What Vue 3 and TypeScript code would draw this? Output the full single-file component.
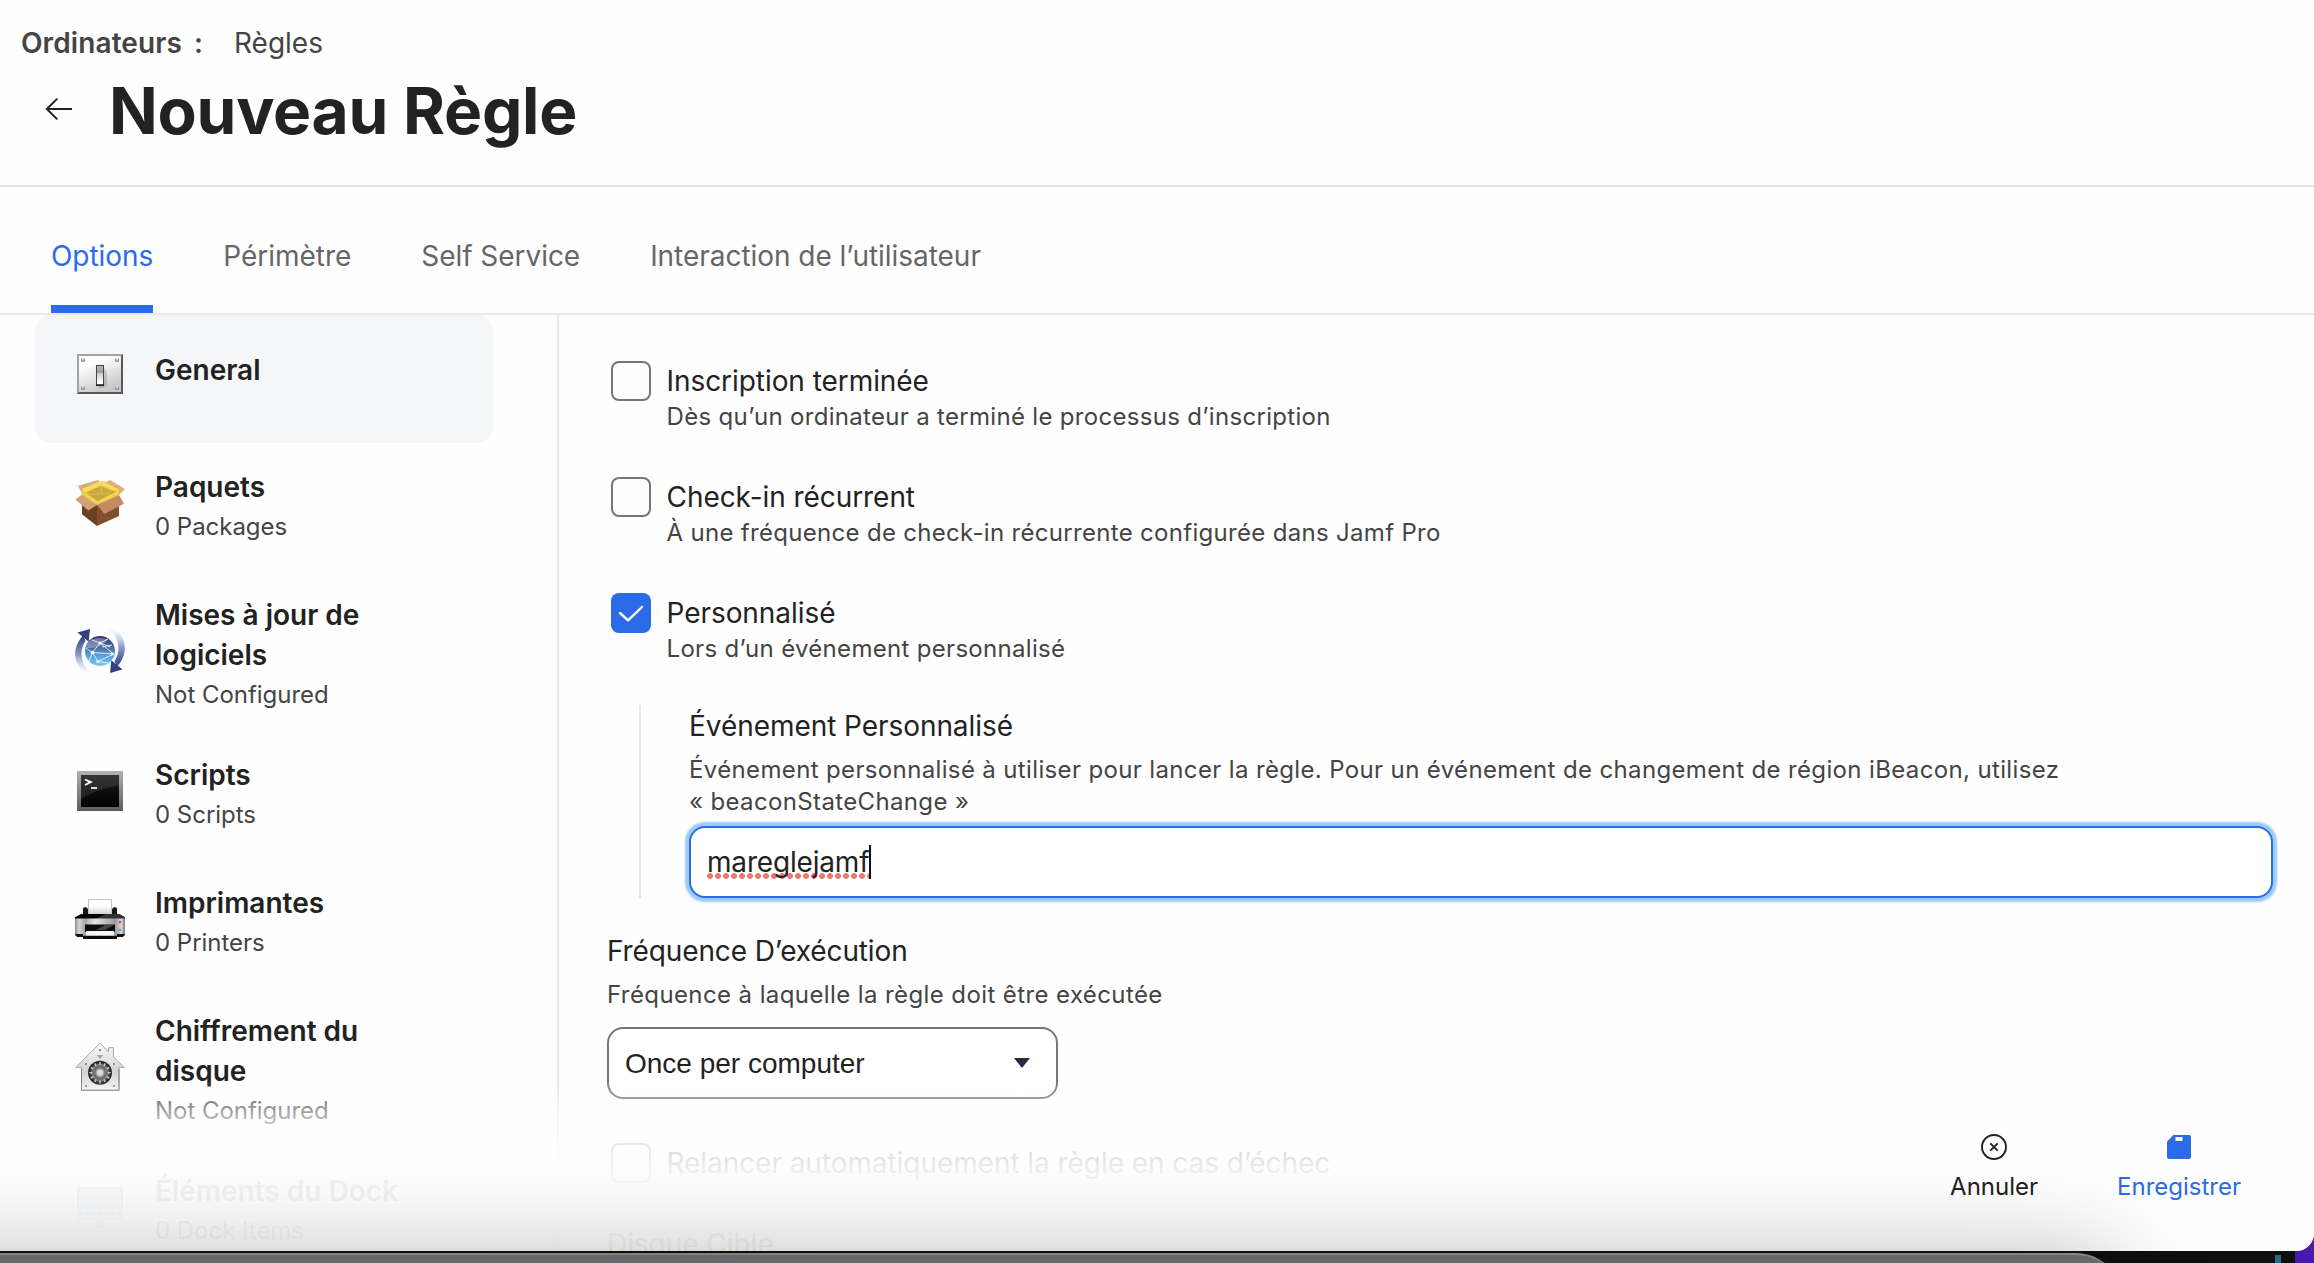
<script setup lang="ts">
import { ref } from 'vue'

interface Section {
  id: string
  title: string
  status?: string
  tall?: boolean
}

const tabs: string[] = ['Options', 'Périmètre', 'Self Service', 'Interaction de l’utilisateur']
const activeTab = ref(0)

const sections: Section[] = [
  { id: 'general', title: 'General' },
  { id: 'packages', title: 'Paquets', status: '0 Packages' },
  { id: 'updates', title: 'Mises à jour de logiciels', status: 'Not Configured', tall: true },
  { id: 'scripts', title: 'Scripts', status: '0 Scripts' },
  { id: 'printers', title: 'Imprimantes', status: '0 Printers' },
  { id: 'encryption', title: 'Chiffrement du disque', status: 'Not Configured', tall: true },
  { id: 'dock', title: 'Éléments du Dock', status: '0 Dock Items' },
]

const triggers = ref([
  { label: 'Inscription terminée', hint: 'Dès qu’un ordinateur a terminé le processus d’inscription', on: false },
  { label: 'Check-in récurrent', hint: 'À une fréquence de check-in récurrente configurée dans Jamf Pro', on: false },
  { label: 'Personnalisé', hint: 'Lors d’un événement personnalisé', on: true },
])

const eventName = ref('mareglejamf')
const ticks = Array.from({ length: 12 }, (_, i) => i * 30)
</script>

<template>
  <div class="desktop">
    <div class="window">
      <header class="header">
        <nav class="crumbs"><b>Ordinateurs</b><b class="colon">:</b><span>Règles</span></nav>
        <div class="title-row">
          <svg class="back" width="28" height="24" viewBox="0 0 28 24">
            <path d="M27 12H2M12.3 1.6L1.8 12l10.5 10.4" fill="none" stroke="#222" stroke-width="2" />
          </svg>
          <h1>Nouveau Règle</h1>
        </div>
      </header>

      <nav class="tabs">
        <a v-for="(t, i) in tabs" :key="t" class="tab" :class="{ active: i === activeTab }" @click="activeTab = i">{{ t }}</a>
      </nav>

      <div class="body">
        <aside class="side">
          <div v-for="s in sections" :key="s.id" class="item" :class="[{ tall: s.tall }, s.id]">
            <svg class="icon" width="50" height="50" viewBox="0 0 50 50">
              <defs>
                <linearGradient id="plate" x1="0" y1="0" x2=".5" y2="1"><stop offset=".3" stop-color="#fdfdfd" /><stop offset="1" stop-color="#c9c9cb" /></linearGradient>
                <linearGradient id="knob" x1="0" y1="0" x2="0" y2="1"><stop offset="0" stop-color="#bbb" /><stop offset=".35" stop-color="#999" /><stop offset=".4" stop-color="#ccc" /><stop offset=".85" stop-color="#fff" /></linearGradient>
                <linearGradient id="arc" x1="0" y1="0" x2="0" y2="1"><stop offset="0" stop-color="#37407f" /><stop offset=".5" stop-color="#8b9ac6" /><stop offset="1" stop-color="#cfe9f8" stop-opacity="0" /></linearGradient>
                <linearGradient id="globe" x1="0" y1="0" x2="0" y2="1"><stop offset="0" stop-color="#34356d" /><stop offset=".45" stop-color="#5276ad" /><stop offset=".6" stop-color="#4d9ddb" /><stop offset="1" stop-color="#7dc6ef" /></linearGradient>
                <linearGradient id="frame" x1="0" y1="0" x2="0" y2="1"><stop offset="0" stop-color="#b3b3b6" /><stop offset="1" stop-color="#5c5c60" /></linearGradient>
                <linearGradient id="screen" x1="0" y1="0" x2="0" y2="1"><stop offset="0" stop-color="#1d1d1d" /><stop offset="1" stop-color="#000" /></linearGradient>
                <linearGradient id="paper" x1="0" y1="0" x2="0" y2="1"><stop offset=".4" stop-color="#fff" /><stop offset="1" stop-color="#cfcfd1" /></linearGradient>
                <linearGradient id="chassis" x1="0" y1="0" x2="1" y2="0"><stop offset="0" stop-color="#8b8b8f" /><stop offset=".08" stop-color="#d5d5d7" /><stop offset=".2" stop-color="#a4a4a8" /><stop offset=".4" stop-color="#e6e6e7" /><stop offset=".8" stop-color="#9a9a9e" /><stop offset=".93" stop-color="#d4d4d6" /><stop offset="1" stop-color="#777" /></linearGradient>
                <linearGradient id="house" x1="0" y1="0" x2="0" y2="1"><stop offset="0" stop-color="#fafafa" /><stop offset=".6" stop-color="#d2d3d4" /><stop offset="1" stop-color="#f2f2f2" /></linearGradient>
                <radialGradient id="dial"><stop offset="0" stop-color="#d8d8d8" /><stop offset=".25" stop-color="#b5b5b5" /><stop offset=".45" stop-color="#6c6c6e" /><stop offset=".7" stop-color="#77777a" /><stop offset=".8" stop-color="#333" /><stop offset="1" stop-color="#222" /></radialGradient>
              </defs>

              <g v-if="s.id === 'general'">
                <rect x="2" y="5" width="46" height="40" fill="#a2a3a5" />
                <path d="M48 5v40H2l2-2h42V7z" fill="#57585b" />
                <rect x="4" y="7" width="42" height="36" fill="url(#plate)" />
                <path d="M29 19l3 4v13l-3 3h-6z" fill="#000" opacity=".14" />
                <rect x="21.5" y="16.5" width="7" height="19.5" fill="url(#knob)" stroke="#444" />
                <path d="M21 36.2h8" stroke="#111" stroke-width="1.4" />
                <g v-for="p in [[8, 11], [42, 11], [8, 39], [42, 39]]" :key="p.join()">
                  <circle :cx="p[0]" :cy="p[1]" r="2" fill="#77787a" />
                  <rect :x="p[0] - 0.8" :y="p[1] - 2.4" width="1.6" height="3" fill="#f4f4f4" />
                </g>
              </g>

              <g v-else-if="s.id === 'packages'">
                <path d="M7 18.7l15 8.3v21L7 36.3z" fill="#6a4123" />
                <path d="M22 27l22-8.3V38L22 48z" fill="#82502a" />
                <path d="M22 29l22-9v5L30 36zM7 25l6 6 9-4-15-8z" fill="#3c210e" opacity=".35" />
                <path d="M3 7.7L23.3 2 25 5.3 7 15.5z" fill="#d9a87c" />
                <path d="M27 6l8-4 15 9-6 6z" fill="#e0ad7b" />
                <path d="M7 11l19-8 3 .2 15 8.6v5.5L22.5 27 7 17.5z" fill="#f0cd45" />
                <path d="M11 14.400L25 8l16 5.800-18.500 9.400z" fill="#c9a93e" />
                <path d="M7 11l19-8.2L44 11.500l-4 1.500-13.500-6L11 14z" fill="#f8db66" />
                <path d="M26.500 8v7L13 17M26.500 15L36 16.500" fill="none" stroke="#dcbd4c" />
                <path d="M9 16l13.500 8.500L43 14" fill="none" stroke="#f4d75c" stroke-width="1.400" />
                <path d="M7 16.500L.3 21.500 13.300 32.500 22 27z" fill="#d3a078" />
                <path d="M22 27l22-10 5 8.700L29.300 36z" fill="#c28b62" />
              </g>

              <g v-else-if="s.id === 'updates'">
                <g v-for="a in [0, 180]" :key="a" :transform="`rotate(${a} 25 25)`">
                  <path d="M8 9.500C-1 19-3 33 6 43.500 10 48 15 49 20 49 8 43 2 28 10.500 14.500z" fill="url(#arc)" />
                  <path d="M2.500 6.500L15 3l-1.300 12.700z" fill="#363f80" />
                </g>
                <circle cx="25" cy="25" r="15" fill="url(#globe)" />
                <path d="M12 17Q20 9 33 13.500Q26 23 11 22z" fill="#fff" opacity=".28" />
                <path d="M17.500 26.500L25 17l13.500 11L23 35.500z M10.500 22l7 4.500L14 35M17.500 26.500L32 27.500h7M25 17l-8-3M25 17l8-4M25 17L35.500 21M23 35.500L33 37M27 21l10-2" fill="none" stroke="#e9f2fb" stroke-width=".9" />
                <g fill="#fff"><circle cx="17.500" cy="26.500" r="1.800" /><circle cx="25" cy="17" r="1.600" /><circle cx="37" cy="28" r="1.500" /><circle cx="23" cy="35.500" r="1.600" /></g>
              </g>

              <g v-else-if="s.id === 'scripts'">
                <rect x="2" y="5" width="46" height="40" fill="url(#frame)" />
                <rect x="6" y="9" width="38" height="32" fill="url(#screen)" />
                <path d="M6 9h38v10.500Q22 23 6 33z" fill="#fff" opacity=".1" />
                <path d="M10 13.500l5.800 2.600L10 19" fill="none" stroke="#fff" stroke-width="1.800" />
                <rect x="16" y="21" width="6" height="2" fill="#ddd" />
              </g>

              <g v-else-if="s.id === 'printers'">
                <path d="M8 14l3-1 2 2v6H8zM42 14l-3-1-2 2v6h5z" fill="#151515" />
                <rect x="13.500" y="5.500" width="23" height="15.500" fill="url(#paper)" stroke="#c4c4c6" />
                <path d="M6 20h38l6 3.200V25H0v-1.800z" fill="#060606" />
                <path d="M31 20h13l6 3.200V25H20z" fill="#333" />
                <path d="M0 24.500h50V42H0z" fill="url(#chassis)" />
                <path d="M0 40h8v3H2zM50 40h-8v3h6z" fill="#111" />
                <rect x="10" y="30.500" width="30" height="7.500" fill="#0c0c0c" />
                <path d="M30 31h9l-9 5h-9z" fill="#444" />
                <path d="M11 37h28v5H11z" fill="#f4f4f4" />
                <path d="M8 41.700h34V45H8z" fill="#080808" />
                <rect x="44" y="27" width="2" height="2" fill="#d83a78" />
                <rect x="44" y="31" width="2" height="2" fill="#f1da3c" />
                <rect x="44" y="35" width="2" height="2" fill="#4aa3dc" />
              </g>

              <g v-else-if="s.id === 'encryption'">
                <path d="M25 1.200L33.600 10V5.700h4.900V15L49.300 25.400H44v22.900H6.500V25.400H.8z" fill="url(#house)" stroke="#a5a6a8" />
                <path d="M6.500 27v21.300H44V27" fill="none" stroke="#7c7d80" />
                <path d="M21.700 13h6.600L25 17z" fill="#a3a4a6" />
                <g fill="#8e8f92"><rect x="24" y="7" width="2" height="2" /><rect x="10" y="21" width="2" height="2" /><rect x="38" y="21" width="2" height="2" /><rect x="10" y="43" width="2" height="2" /><rect x="38" y="43" width="2" height="2" /></g>
                <circle cx="25" cy="30.700" r="12" fill="url(#dial)" />
                <path v-for="d in ticks" :key="d" d="M25 20v3" :transform="`rotate(${d} 25 30.700)`" stroke="#ccc" stroke-width="1.400" />
                <circle cx="25" cy="30.700" r="3" fill="#dcdcdc" />
              </g>

              <g v-else>
                <rect x="2" y="5" width="46" height="28" fill="#777" />
                <rect x="4" y="7" width="42" height="24" fill="#7ab4e0" />
                <path d="M8 29h34" stroke="#eee" stroke-width="3" stroke-dasharray="4 2" />
                <rect x="2" y="33" width="46" height="5" fill="#c8c8ca" />
                <circle cx="25" cy="36" r="1" fill="#555" />
                <path d="M20 38h10l1 7h3v1H16v-1h3z" fill="#c4c4c4" />
              </g>
            </svg>
            <div class="item-text">
              <div class="item-title">{{ s.title }}</div>
              <div v-if="s.status" class="item-status">{{ s.status }}</div>
            </div>
          </div>
        </aside>

        <main class="form">
          <div v-for="t in triggers" :key="t.label" class="option" @click="t.on = !t.on">
            <span class="box" :class="{ on: t.on }">
              <svg v-if="t.on" width="40" height="40" viewBox="0 0 40 40"><path d="M9 20l8 7.300L31 14" fill="none" stroke="#fff" stroke-width="2.400" stroke-linecap="round" stroke-linejoin="round" /></svg>
            </span>
            <div>
              <div class="label">{{ t.label }}</div>
              <div class="hint">{{ t.hint }}</div>
            </div>
          </div>

          <section class="nested">
            <div class="label">Événement Personnalisé</div>
            <div class="hint">Événement personnalisé à utiliser pour lancer la règle. Pour un événement de changement de région iBeacon, utilisez<br />«&nbsp;beaconStateChange&nbsp;»</div>
            <div class="input"><span class="typed">{{ eventName }}</span><i class="caret"></i></div>
          </section>

          <section class="frequency">
            <div class="label">Fréquence D’exécution</div>
            <div class="hint">Fréquence à laquelle la règle doit être exécutée</div>
            <div class="select">
              <span>Once per computer</span>
              <svg width="16" height="10" viewBox="0 0 16 10"><path d="M0 0h16L8 10z" fill="#252c40" /></svg>
            </div>
          </section>

          <div class="option retry">
            <span class="box"></span>
            <div class="label">Relancer automatiquement la règle en cas d’échec</div>
          </div>
          <div class="label disk">Disque Cible</div>
        </main>
      </div>

      <footer class="footer">
        <button class="action">
          <svg width="28" height="28" viewBox="0 0 28 28"><circle cx="14" cy="14" r="12" fill="none" stroke="#222" stroke-width="1.900" /><path d="M10.300 10.300l7.400 7.400M17.700 10.300l-7.400 7.400" stroke="#222" stroke-width="1.900" /></svg>
          <span>Annuler</span>
        </button>
        <button class="action save">
          <svg width="28" height="28" viewBox="0 0 28 28"><path d="M8.500 2H24a2 2 0 0 1 2 2v20a2 2 0 0 1-2 2H4a2 2 0 0 1-2-2V8.500z" fill="#2c6be8" /><rect x="10.500" y="4" width="7" height="4" fill="#fff" /></svg>
          <span>Enregistrer</span>
        </button>
      </footer>
    </div>
    <div class="strip"><i class="teal"></i><i class="purple"></i></div>
    <div class="front-window"></div>
  </div>
</template>

<style>
body { margin: 0; overflow: hidden; }
</style>

<style scoped>
.desktop {
  position: relative;
  width: 2314px;
  height: 1263px;
  overflow: hidden;
  background: linear-gradient(90deg, #0c0c0c 2294px, #4a1db0 2295px);
  font-family: Inter, "Liberation Sans", sans-serif;
  font-size: 28px;
  line-height: 40px;
  color: #222;
}
.window {
  position: relative;
  z-index: 0;
  display: flex;
  flex-direction: column;
  height: 1251px;
  overflow: hidden;
  background: #fefefe;
  border-bottom-right-radius: 18px;
}
.header { box-sizing: border-box; height: 187px; padding: 23px 21px 0; border-bottom: 2px solid #e2e2e2; }
.crumbs { display: flex; color: #444; }
.crumbs b { font-weight: 600; letter-spacing: 0.1px; }
.crumbs .colon { margin: 0 31px 0 12px; }
.title-row { display: flex; align-items: center; margin-top: 8px; padding-left: 24px; height: 80px; }
.back { margin-top: -4px; }
h1 { margin: 0 0 0 36px; font-size: 64px; line-height: 80px; font-weight: 700; letter-spacing: -0.25px; }
.tabs { display: flex; gap: 70px; height: 126px; padding-left: 51px; border-bottom: 2px solid #e9e9e9; color: #666; flex: none; }
.tab { box-sizing: border-box; height: 126px; padding-top: 49px; white-space: nowrap; letter-spacing: -0.04px; }
.tab.active { color: #2c6be8; border-bottom: 8px solid #2c6be8; }

.body { display: flex; flex: 1; min-height: 0; }
.side { box-sizing: border-box; width: 559px; flex: none; padding-left: 35px; border-right: 2px solid #e8e8ea; height: 1000px; }
.item { box-sizing: border-box; display: flex; width: 458px; height: 128px; padding: 24px 0 0 40px; }
.item.tall { height: 160px; }
.item.general { background: #f5f6f8; border-radius: 16px; padding-top: 35px; }
.icon { flex: none; margin: 11px 30px 0 0; }
.tall .icon { margin-top: 31px; }
.general .icon { margin-top: -1px; }
.item-text { width: 260px; }
.tall .item-text { width: 225px; }
.item-title { font-weight: 600; }
.item-status { font-size: 24px; line-height: 40px; color: #444; letter-spacing: -0.03px; }

.form { flex: 1; padding: 46px 41px 0 48px; }
.option { display: flex; gap: 15.500px; height: 116px; padding-left: 4px; }
.option .hint { letter-spacing: 0.31px; }
.box { box-sizing: border-box; width: 40px; height: 40px; flex: none; border: 2px solid #76757a; border-radius: 8px; }
.box.on { border: 0; background: #2c6be8; }
.box svg { display: block; }
.label { white-space: nowrap; letter-spacing: -0.06px; }
.hint { font-size: 24px; line-height: 32px; color: #444; letter-spacing: 0.36px; white-space: nowrap; }
.nested { box-sizing: border-box; height: 193px; margin: -4px 0 0 32px; padding: 1px 0 0 48px; border-left: 2px solid #e6e6e6; }
.nested .hint, .frequency .hint { margin-top: 8px; }
.frequency .label { letter-spacing: -0.12px; }
.frequency .hint { letter-spacing: 0.4px; }
.input {
  box-sizing: border-box;
  display: flex;
  align-items: center;
  height: 72px;
  margin-top: 8px;
  padding-left: 16px;
  border: 2px solid #2c6be8;
  border-radius: 16px;
  background: #fff;
  box-shadow: 0 0 2px 4px #9accf9;
}
.typed {
  height: 40px;
  letter-spacing: -0.18px;
  background: radial-gradient(circle at 3px 3px, #f0776e 2.600px, transparent 3.200px) 0 31px / 8px 6px repeat-x;
}
.caret { width: 2px; height: 34px; background: #111; }
.frequency { margin-top: 33px; }
.select {
  box-sizing: border-box;
  display: flex;
  align-items: center;
  justify-content: space-between;
  width: 451px;
  height: 72px;
  margin-top: 16px;
  padding: 0 26px 0 16px;
  border: 2px solid #76757a;
  border-radius: 16px;
  background: #fff;
  font-family: "Liberation Sans", Arial, sans-serif;
}
.select span { padding-top: 2px; }
.retry { height: 81px; margin-top: 44px; }

.footer {
  position: absolute;
  left: 0;
  right: 0;
  bottom: 0;
  box-sizing: border-box;
  display: flex;
  justify-content: flex-end;
  align-items: flex-start;
  gap: 79px;
  height: 171px;
  padding: 53px 73px 0 0;
  background: linear-gradient(#fefefe00, #fefefeb8 45px, #fefefed6 65px, #fefefef0 95px, #fefefef2);
  z-index: 2;
}
.action {
  display: flex;
  flex-direction: column;
  align-items: center;
  padding: 0;
  border: 0;
  background: none;
  font: 24px/32px Inter, "Liberation Sans", sans-serif;
  color: #222;
}
.action span { margin-top: 10px; }
.save { color: #2c6be8; }

.strip { position: relative; height: 12px; background: #0f0f10; display: flex; justify-content: flex-end; align-items: flex-end; z-index: 0; }
.teal { width: 6px; height: 8px; background: #2f6784; margin-right: 14px; }
.purple { width: 19px; height: 12px; background: #4719ac; }
.front-window {
  position: absolute;
  z-index: 1;
  left: -200px;
  top: 1253px;
  width: 2322px;
  height: 400px;
  box-sizing: border-box;
  border-top: 2px solid #858387;
  border-radius: 46px;
  background: linear-gradient(90deg, #6b666b 400px, #67676b 900px, #6b666b 1700px);
  box-shadow: 0 0 90px rgba(0, 0, 0, 0.26);
}
</style>
